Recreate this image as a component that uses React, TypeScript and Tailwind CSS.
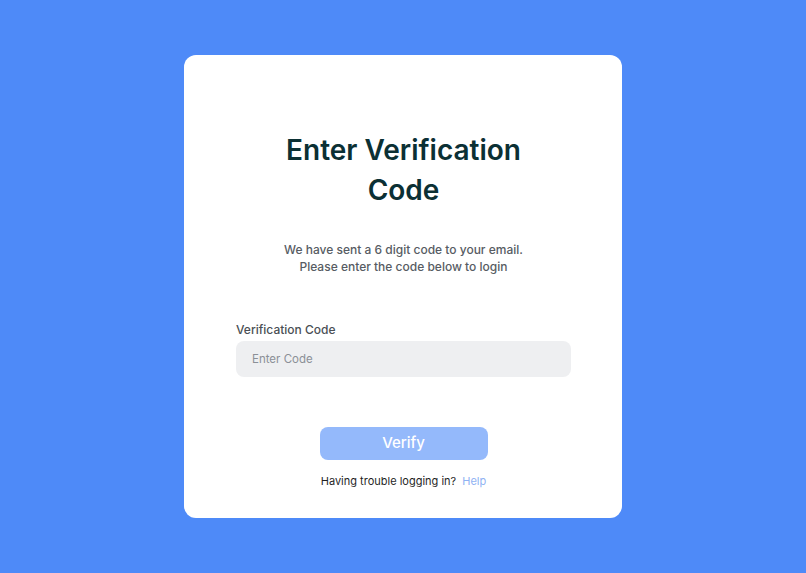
export default function App() {
  return (
    <div
      className="min-h-screen w-full flex items-center justify-center bg-[#4e8af8]"
      style={{ fontFamily: 'Inter, "Noto Sans", sans-serif' }}
    >
      <div className="w-[438px] bg-white rounded-[12px] pl-[52px] pr-[51px] pt-[75px] pb-[29px] flex flex-col items-center">
        <h1 className="max-w-[260px] text-center text-[28px] leading-[40px] font-semibold text-[#0b3034]">
          Enter Verification Code
        </h1>
        <p className="mt-[31px] text-center text-[12px] leading-[17px] font-medium text-[#575c63]">
          We have sent a 6 digit code to your email.
          <br />
          Please enter the code below to login
        </p>
        <div className="w-full mt-[46px]">
          <label className="block text-[12px] leading-[18px] font-medium text-[#4a4f55] mb-[2px]">
            Verification Code
          </label>
          <input
            type="text"
            placeholder="Enter Code"
            className="w-full h-[36px] rounded-[8px] bg-[#eeeff1] px-[16px] text-[11.5px] text-[#333] placeholder:text-[#8b9097] outline-none"
          />
        </div>
        <button
          type="button"
          className="mt-[50px] w-[168px] h-[33px] rounded-[8px] bg-[#94b9fb] text-white text-[15px] font-medium"
        >
          Verify
        </button>
        <p className="mt-[13px] text-[11px] leading-[16px] text-[#1f1f1f]">
          Having trouble logging in?{' '}
          <a href="#" className="ml-[3px] text-[#8fb2f3]">
            Help
          </a>
        </p>
      </div>
    </div>
  );
}
